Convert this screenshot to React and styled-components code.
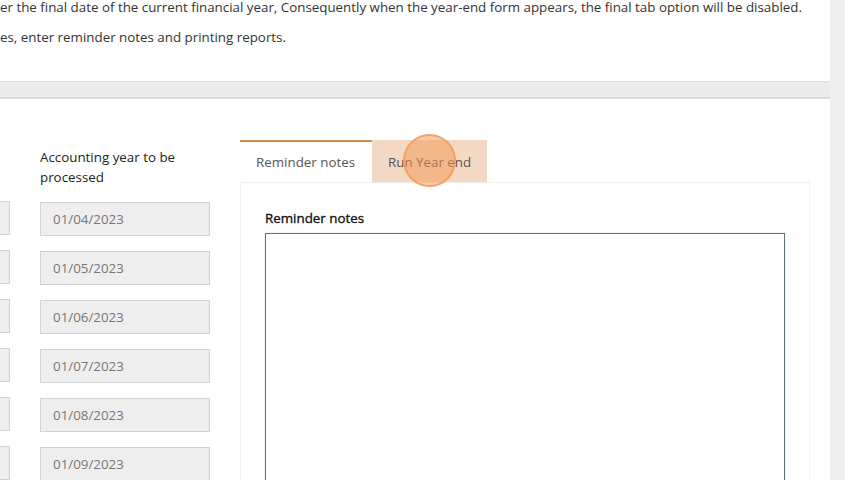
import styled, { createGlobalStyle } from 'styled-components'

const GlobalStyle = createGlobalStyle`
  html, body {
    margin: 0;
    padding: 0;
    background: #fff;
    overflow: hidden;
  }
  body {
    font-family: "Open Sans", "Liberation Sans", sans-serif;
    font-size: 13.35px;
    color: #333;
  }
`

const Page = styled.div`
  display: flex;
  height: 480px;
  overflow: hidden;
`

const Main = styled.div`
  width: 830px;
  flex-shrink: 0;
  display: flex;
  flex-direction: column;
  background: #ebebeb;
  overflow: hidden;
`

const Gutter = styled.div`
  width: 15px;
  flex-shrink: 0;
  background: #efedef;
`

const Intro = styled.section`
  height: 81px;
  flex-shrink: 0;
  background: #fff;
  border-bottom: 1px solid #dedede;
  overflow: hidden;

  & p {
    margin: 10px 0 0;
    line-height: 20px;
    white-space: nowrap;
    color: #333;
  }
  & p:first-child {
    margin-top: -3px;
  }
`

const Work = styled.section`
  margin-top: 15px;
  flex: 1;
  background: #fff;
  border-top: 2px solid #d9d9d9;
  padding-top: 41px;
  display: flex;
  gap: 30px;
  margin-left: -160px;
  overflow: hidden;
`

const Column = styled.div`
  width: 170px;
  flex-shrink: 0;
  padding-top: 7px;
  display: flex;
  flex-direction: column;
  gap: 15px;
`

const FieldLabel = styled.div`
  height: 40px;
  line-height: 20px;
  color: #222;
`

const DateInput = styled.div`
  box-sizing: border-box;
  height: 34px;
  line-height: 32px;
  padding: 0 12px;
  background: #eeeeee;
  border: 1px solid #d2d2d2;
  color: #777;
`

const TabsArea = styled.div`
  width: 570px;
  flex-shrink: 0;
  display: flex;
  flex-direction: column;
`

const TabBar = styled.div`
  display: flex;
  height: 42px;
  border-bottom: 1px solid #efefef;
`

const Tab = styled.div`
  position: relative;
  box-sizing: border-box;
  width: ${p => p.$w}px;
  padding: 0 16px;
  line-height: 40px;
  color: #555;
  white-space: nowrap;
  border-top: 2px solid ${p => (p.$active ? '#c98b4f' : 'transparent')};
  background: ${p => (p.$hover ? '#f3d9c3' : '#fff')};
`

// click marker drawn by the screen recorder
const ClickMark = styled.span`
  position: absolute;
  left: 50%;
  top: 50%;
  width: 49px;
  height: 49px;
  margin: -28px 0 0 -27px;
  border-radius: 50%;
  background: rgba(246, 150, 80, 0.5);
  border: 2px solid rgba(242, 155, 90, 0.85);
`

const TabPanel = styled.div`
  flex: 1;
  border: 1px solid #f3f3f3;
  border-top: none;
  padding: 25px 24px 0;
`

const NotesLabel = styled.div`
  line-height: 20px;
  color: #111;
  -webkit-text-stroke: 0.35px #111;
  margin-bottom: 5px;
`

const Notes = styled.div`
  height: 300px;
  border: 1px solid #577576;
  box-shadow: 0 0 2px rgba(140, 220, 230, 0.5);
`

const prev = ['01/04/2022', '01/05/2022', '01/06/2022', '01/07/2022', '01/08/2022', '01/09/2022']
const dates = ['01/04/2023', '01/05/2023', '01/06/2023', '01/07/2023', '01/08/2023', '01/09/2023']

function App() {
  return (
    <>
      <GlobalStyle />
      <Page>
        <Main>
          <Intro>
            <p>er the final date of the current financial year, Consequently when the year-end form appears, the final tab option will be disabled.</p>
            <p>es, enter reminder notes and printing reports.</p>
          </Intro>
          <Work>
            <Column>
              <FieldLabel>Last year</FieldLabel>
              {prev.map(d => <DateInput key={d}>{d}</DateInput>)}
            </Column>
            <Column>
              <FieldLabel>Accounting year to be processed</FieldLabel>
              {dates.map(d => <DateInput key={d}>{d}</DateInput>)}
            </Column>
            <TabsArea>
              <TabBar>
                <Tab $active $w={132}>Reminder notes</Tab>
                <Tab $hover $w={115}>
                  Run Year end
                  <ClickMark />
                </Tab>
              </TabBar>
              <TabPanel>
                <NotesLabel>Reminder notes</NotesLabel>
                <Notes />
              </TabPanel>
            </TabsArea>
          </Work>
        </Main>
        <Gutter />
      </Page>
    </>
  )
}

export default App
